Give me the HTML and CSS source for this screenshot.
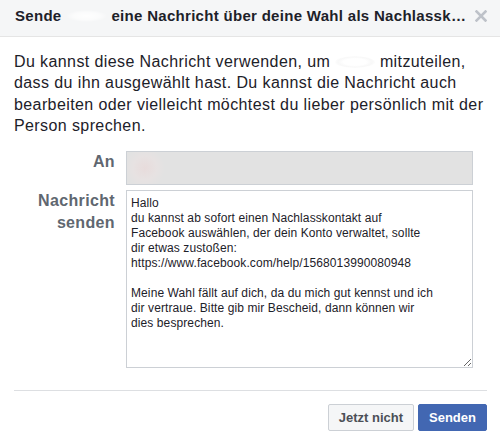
FILE: index.html
```html
<!DOCTYPE html>
<html lang="de">
<head>
<meta charset="utf-8">
<title>Nachlasskontakt</title>
<link rel="stylesheet" href="styles.css">
</head>
<body>
<div class="dialog">
  <div class="header">
    <h2 class="title">Sende <span class="blur blur-title"></span> eine Nachricht über deine Wahl als Nachlasskontakt</h2>
    <button class="close" type="button" aria-label="Schließen">
      <svg width="12" height="12" viewBox="0 0 12 12" aria-hidden="true"><path d="M1.5 1.5 L10.5 10.5 M10.5 1.5 L1.5 10.5" stroke="#bec2c9" stroke-width="2.6" stroke-linecap="square" fill="none"/></svg>
    </button>
  </div>
  <div class="body">
    <p class="intro">Du kannst diese Nachricht verwenden, um <span class="blur blur-name"></span> mitzuteilen, dass du ihn ausgewählt hast. Du kannst die Nachricht auch bearbeiten oder vielleicht möchtest du lieber persönlich mit der Person sprechen.</p>
    <div class="form">
      <label class="label">An</label>
      <div class="to-field"></div>
      <label class="label" for="msg">Nachricht senden</label>
      <textarea class="message" id="msg">Hallo
du kannst ab sofort einen Nachlasskontakt auf
Facebook auswählen, der dein Konto verwaltet, sollte
dir etwas zustoßen:
https://www.facebook.com/help/1568013990080948

Meine Wahl fällt auf dich, da du mich gut kennst und ich
dir vertraue. Bitte gib mir Bescheid, dann können wir
dies besprechen.</textarea>
    </div>
  </div>
  <div class="footer">
    <button class="btn btn-secondary" type="button">Jetzt nicht</button>
    <button class="btn btn-primary" type="button">Senden</button>
  </div>
</div>
</body>
</html>
```
FILE: styles.css
```css
html, body {
  margin: 0;
  padding: 0;
  background: #ffffff;
}

body {
  font-family: "Liberation Sans", Arial, sans-serif;
  color: #1d2129;
}

.dialog {
  width: 500px;
  height: 445px;
  background: #ffffff;
  overflow: hidden;
}

.header {
  display: flex;
  align-items: flex-start;
  background: #f5f6f7;
  border-bottom: 1px solid #e5e5e5;
  padding: 6px 13px 11px 15px;
}

.title {
  flex: 1;
  min-width: 0;
  margin: 0 6px 0 0;
  font-size: 15px;
  font-weight: bold;
  line-height: 19px;
  letter-spacing: 0.3px;
  color: #1d2129;
  white-space: nowrap;
  overflow: hidden;
  text-overflow: ellipsis;
}

.close {
  flex: none;
  margin: 4px 0 0 0;
  padding: 0;
  border: 0;
  background: transparent;
  width: 12px;
  height: 12px;
  line-height: 0;
  cursor: pointer;
}

.blur {
  display: inline-block;
  height: 12px;
  vertical-align: -1px;
  border-radius: 50%;
}

.blur-title {
  width: 41px;
  background: radial-gradient(ellipse at center, rgba(255,255,255,0.95) 0%, rgba(255,255,255,0.6) 45%, rgba(255,255,255,0) 72%);
}

.blur-name {
  width: 40px;
  background: radial-gradient(ellipse at center, rgba(255,255,255,1) 40%, rgba(232,232,232,0.3) 60%, rgba(255,255,255,0) 75%);
}

.body {
  padding: 14px 13px 0 14px;
}

.intro {
  margin: 0;
  font-size: 16px;
  line-height: 21.33px;
  letter-spacing: 0.4px;
  color: #1d2129;
}

.form {
  display: grid;
  grid-template-columns: 101px 347px;
  column-gap: 11px;
  row-gap: 5px;
  margin-top: 15px;
}

.label {
  text-align: right;
  font-size: 16px;
  font-weight: bold;
  line-height: 22px;
  letter-spacing: 0.35px;
  color: #606770;
}

.to-field {
  box-sizing: border-box;
  height: 34px;
  border: 1px solid #ccd0d5;
  background-color: #e2e2e2;
  background-image: radial-gradient(circle at 18px 16px, rgba(236,214,214,0.55) 0, rgba(240,226,226,0.35) 12px, rgba(226,226,226,0) 20px);
}

.message {
  box-sizing: border-box;
  display: block;
  width: 347px;
  height: 178px;
  margin: 0;
  padding: 5px 4px 4px;
  border: 1px solid #ccd0d5;
  border-radius: 0;
  font-family: "Liberation Sans", Arial, sans-serif;
  font-size: 12px;
  line-height: 15px;
  letter-spacing: 0.1px;
  color: #1d2129;
  background: #ffffff;
  outline: none;
  overflow: hidden;
}

.footer {
  display: flex;
  justify-content: flex-end;
  gap: 4px;
  margin: 22px 13px 0 14px;
  padding: 13px 0 12px;
  border-top: 1px solid #dddfe2;
}

.btn {
  box-sizing: border-box;
  height: 27px;
  padding: 0 10px;
  border: 1px solid;
  border-radius: 2px;
  font-family: "Liberation Sans", Arial, sans-serif;
  font-size: 13px;
  font-weight: bold;
  line-height: 25px;
  cursor: pointer;
}

.btn-secondary {
  background: #f5f6f7;
  border-color: #ccd0d5;
  color: #4b4f56;
}

.btn-primary {
  background: #4267b2;
  border-color: #4267b2;
  color: #ffffff;
}
```
